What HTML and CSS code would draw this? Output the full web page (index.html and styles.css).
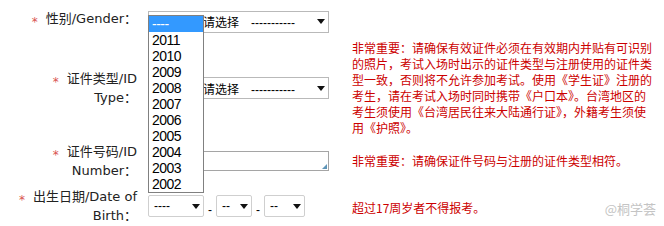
FILE: index.html
```html
<!DOCTYPE html>
<html lang="zh-CN">
<head>
<meta charset="utf-8">
<title>报名信息</title>
<link rel="stylesheet" href="styles.css">
</head>
<body>
<div class="page">
  <div class="form">
    <div class="label"><span class="req">*</span>性别/Gender：</div>
    <div class="field">
      <div class="select select-wide select-top">
        <span class="select-text">请选择　-----------</span><span class="arrow"></span>
        <ul class="dropdown">
          <li class="active">----</li>
          <li>2011</li>
          <li>2010</li>
          <li>2009</li>
          <li>2008</li>
          <li>2007</li>
          <li>2006</li>
          <li>2005</li>
          <li>2004</li>
          <li>2003</li>
          <li>2002</li>
        </ul>
      </div>
    </div>
    <div class="note"></div>

    <div class="label"><span class="req">*</span>证件类型/ID<br>Type：</div>
    <div class="field">
      <div class="select select-wide">
        <span class="select-text">请选择　-----------</span><span class="arrow"></span>
      </div>
    </div>
    <div class="note">非常重要：请确保有效证件必须在有效期内并贴有可识别的照片，考试入场时出示的证件类型与注册使用的证件类型一致，否则将不允许参加考试。使用《学生证》注册的考生，请在考试入场时同时携带《户口本》。台湾地区的考生须使用《台湾居民往来大陆通行证》，外籍考生须使用《护照》。</div>

    <div class="label"><span class="req">*</span>证件号码/ID<br>Number：</div>
    <div class="field">
      <div class="textarea"><span class="grip"></span></div>
    </div>
    <div class="note">非常重要：请确保证件号码与注册的证件类型相符。</div>

    <div class="label"><span class="req">*</span>出生日期/Date of<br>Birth：</div>
    <div class="field date">
      <div class="select select-year"><span class="select-text">----</span><span class="arrow"></span></div>
      <span class="sep">-</span>
      <div class="select select-month"><span class="select-text">--</span><span class="arrow"></span></div>
      <span class="sep">-</span>
      <div class="select select-day"><span class="select-text">--</span><span class="arrow"></span></div>
    </div>
    <div class="note note-last">超过17周岁者不得报考。</div>
  </div>
  <div class="watermark">@桐学荟</div>
</div>
</body>
</html>
```

FILE: styles.css
```css
html, body {
  margin: 0;
  padding: 0;
  background: #ffffff;
}

body {
  font-family: "DejaVu Sans", "Noto Sans CJK SC", sans-serif;
}

.page {
  position: relative;
  width: 664px;
  height: 226px;
  overflow: hidden;
}

.form {
  display: grid;
  grid-template-columns: 137px 193px 312px;
  grid-template-rows: 40px 96px 50px 40px;
  column-gap: 11px;
  align-items: center;
}

.label {
  text-align: right;
  font-size: 13px;
  line-height: 16px;
  color: #222222;
}

.req {
  color: #d9534f;
  font-size: 12px;
  margin-right: 8px;
  vertical-align: -3px;
}

.field {
  display: flex;
  align-items: center;
}

.select {
  position: relative;
  box-sizing: border-box;
  height: 22px;
  border: 1px solid #b9b9b9;
  background: #ffffff;
  display: flex;
  align-items: center;
  font-family: "Liberation Sans", "Noto Sans CJK SC", sans-serif;
  font-size: 12px;
  color: #000000;
}

.select-top {
  margin-top: 3px;
}

.select-wide {
  width: 181px;
}

.select-text {
  flex: 1;
  padding-left: 3px;
  white-space: nowrap;
  overflow: hidden;
}

.select-wide .select-text {
  padding-left: 54px;
}

.arrow {
  width: 0;
  height: 0;
  border-left: 4px solid transparent;
  border-right: 4px solid transparent;
  border-top: 5px solid #111111;
  margin-right: 3px;
}

.dropdown {
  position: absolute;
  left: -1px;
  top: 3px;
  z-index: 10;
  box-sizing: border-box;
  width: 56px;
  margin: 0;
  padding: 0;
  list-style: none;
  border: 1px solid #808080;
  background: #ffffff;
  font-family: "Liberation Sans", sans-serif;
  font-size: 14px;
  letter-spacing: -0.5px;
  color: #000000;
}

.dropdown li {
  height: 16px;
  line-height: 16px;
  padding-left: 3px;
}

.dropdown li.active {
  background: #3399ff;
  color: #ffffff;
}

.textarea {
  position: relative;
  box-sizing: border-box;
  width: 181px;
  height: 20px;
  border: 1px solid #a5a5a5;
  background: #ffffff;
}

.grip {
  position: absolute;
  right: 1px;
  bottom: 1px;
  width: 0;
  height: 0;
  border-left: 5px solid transparent;
  border-bottom: 5px solid #5f95b8;
}

.date {
  align-items: flex-end;
}

.date .select {
  border-color: #cfcfcf;
  border-radius: 2px;
}

.date .select-text {
  padding-left: 5px;
}

.select-year {
  width: 56px;
}

.select-month {
  width: 36px;
}

.select-day {
  width: 41px;
}

.sep {
  width: 12px;
  text-align: center;
  font-family: "Liberation Sans", sans-serif;
  font-size: 12px;
  line-height: 12px;
  margin-bottom: 1px;
}

.note {
  width: 302px;
  font-family: "Noto Sans CJK SC", sans-serif;
  font-size: 12px;
  line-height: 16px;
  color: #cc0000;
}

.note-last {
  margin-top: 4px;
}

.watermark {
  position: absolute;
  right: 8px;
  bottom: 8px;
  font-family: "Noto Sans CJK SC", sans-serif;
  font-size: 13px;
  color: #c4c4c4;
}
```
